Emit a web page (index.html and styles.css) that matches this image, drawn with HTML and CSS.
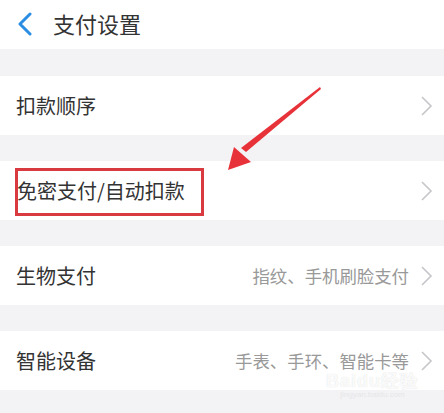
FILE: index.html
```html
<!DOCTYPE html>
<html lang="zh">
<head>
<meta charset="utf-8">
<link rel="stylesheet" href="styles.css">
</head>
<body>
<div class="page">
  <header class="header">
    <svg class="back" width="16" height="24" viewBox="0 0 16 24"><polyline points="13,2 3,12 13,22" fill="none" stroke="#2b8ee2" stroke-width="3" stroke-linecap="round" stroke-linejoin="round"/></svg>
    <span class="title">支付设置</span>
  </header>
  <div class="list">
    <div class="row first">
      <span class="label">扣款顺序</span>
      <span class="right"><svg class="chev" width="14" height="22" viewBox="0 0 14 22"><polyline points="2,2 11,11 2,20" fill="none" stroke="#c6c6ca" stroke-width="1.6"/></svg></span>
    </div>
    <div class="row marked">
      <span class="label">免密支付/自动扣款</span>
      <span class="right"><svg class="chev" width="14" height="22" viewBox="0 0 14 22"><polyline points="2,2 11,11 2,20" fill="none" stroke="#c6c6ca" stroke-width="1.6"/></svg></span>
      <div class="redbox"></div>
    </div>
    <div class="row">
      <span class="label">生物支付</span>
      <span class="right"><span class="value">指纹、手机刷脸支付</span><svg class="chev" width="14" height="22" viewBox="0 0 14 22"><polyline points="2,2 11,11 2,20" fill="none" stroke="#c6c6ca" stroke-width="1.6"/></svg></span>
    </div>
    <div class="row">
      <span class="label">智能设备</span>
      <span class="right"><span class="value">手表、手环、智能卡等</span><svg class="chev" width="14" height="22" viewBox="0 0 14 22"><polyline points="2,2 11,11 2,20" fill="none" stroke="#c6c6ca" stroke-width="1.6"/></svg></span>
    </div>
  </div>
  <svg class="arrow" width="444" height="413" viewBox="0 0 444 413">
    <polygon points="320,87 321,89 246,152 241,148" fill="#e8323a"/>
    <polygon points="228,170 234,147 251,162" fill="#e8323a"/>
  </svg>
  <div class="watermark">
    <div class="wm1">Bai<span class="du">du</span>经验</div>
    <div class="wm2">jingyan.baidu.com</div>
  </div>
</div>
</body>
</html>
```
FILE: styles.css
```css
html, body {
  margin: 0;
  padding: 0;
}
body {
  background: #f3f3f5;
  font-family: "Noto Sans CJK SC", "Noto Sans", sans-serif;
  color: #333;
}
.page {
  position: relative;
  width: 444px;
  height: 413px;
  overflow: hidden;
}
.header {
  height: 49px;
  background: #fff;
  display: flex;
  align-items: center;
  padding-left: 17px;
  box-sizing: border-box;
}
.back {
  display: block;
  margin-top: -2px;
}
.title {
  margin-left: 20px;
  font-size: 22px;
  line-height: 1;
  color: #333;
  margin-top: -3px;
}
.list {
  display: flex;
  flex-direction: column;
}
.row {
  position: relative;
  height: 59px;
  background: #fff;
  margin-top: 26px;
  display: flex;
  align-items: center;
  justify-content: space-between;
  padding: 0 10px 0 16px;
}
.row.first {
  margin-top: 27px;
}
.label {
  font-size: 20px;
  line-height: 1;
  color: #333;
}
.marked .label {
  margin-left: 1px;
}
.right {
  display: flex;
  align-items: center;
  gap: 11px;
}
.value {
  font-size: 17.4px;
  line-height: 1;
  color: #999;
}
.chev {
  display: block;
}
.redbox {
  position: absolute;
  left: 15px;
  top: 7px;
  width: 189px;
  height: 48px;
  box-sizing: border-box;
  border: 3px solid #d83a3f;
}
.arrow {
  position: absolute;
  left: 0;
  top: 0;
}
.watermark {
  position: absolute;
  left: 326px;
  top: 373px;
  color: rgba(255,255,255,0.9);
  text-shadow: 0 0 1px #d8d8d8;
  font-family: "Liberation Sans", sans-serif;
  text-align: center;
}
.wm1 {
  font-size: 18px;
  font-weight: bold;
  line-height: 17px;
  letter-spacing: 1px;
}
.wm2 {
  font-size: 8px;
  line-height: 10px;
  color: #e6e6e8;
  text-shadow: none;
}
```
